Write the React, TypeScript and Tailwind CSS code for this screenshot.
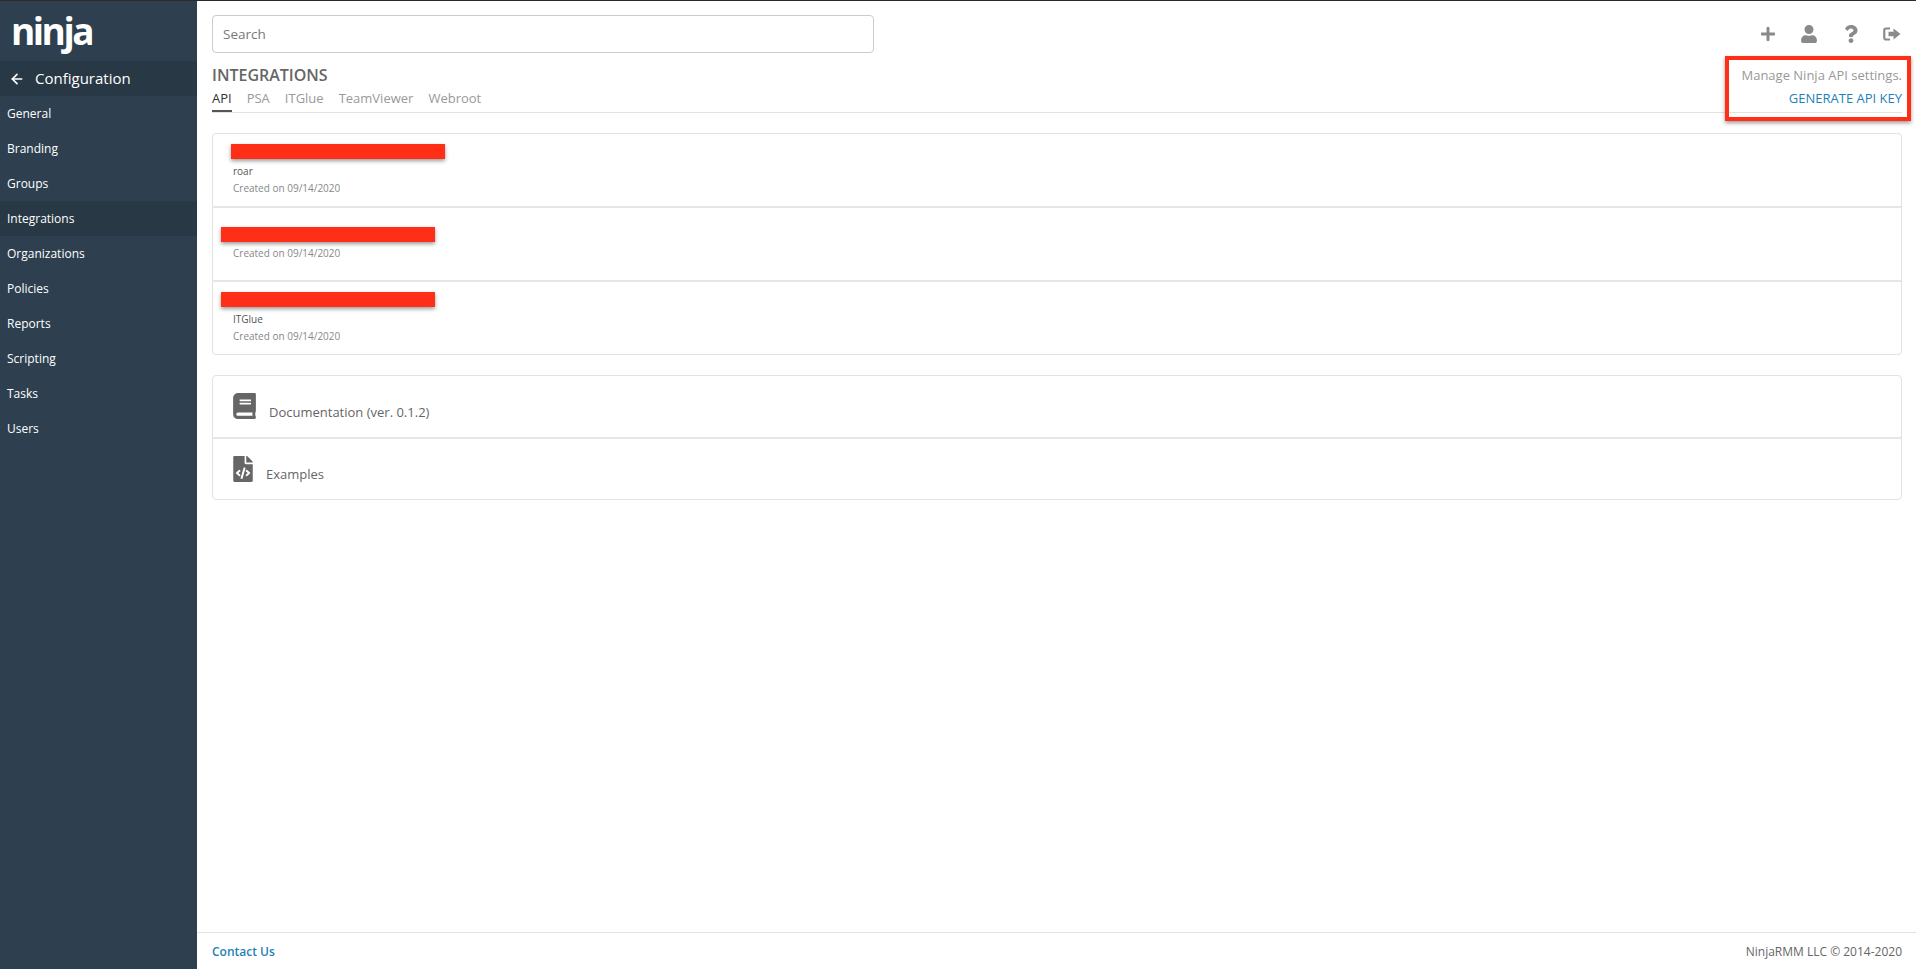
import { ArrowLeft } from 'lucide-react';
import { FaPlus, FaUser, FaQuestion, FaBook, FaFileCode } from 'react-icons/fa';

const navItems = ['General', 'Branding', 'Groups', 'Integrations', 'Organizations', 'Policies', 'Reports', 'Scripting', 'Tasks', 'Users'];
const tabs = ['API', 'PSA', 'ITGlue', 'TeamViewer', 'Webroot'];

function Redaction({ className }: { className: string }) {
  return <div className={`absolute h-[15px] w-[214px] bg-[#ff2f17] shadow-[0_2px_4px_rgba(0,0,0,0.4)] ${className}`} />;
}

function SignOutIcon() {
  return (
    <svg width="18" height="14" viewBox="0 0 18 14" fill="none">
      <path d="M7 1.5H3A1.75 1.75 0 0 0 1.25 3.25v7.5A1.75 1.75 0 0 0 3 12.5h4" stroke="currentColor" strokeWidth="2.2" />
      <path d="M10.5 1.5 17.5 7l-7 5.5V9.2H5.5V4.8h5z" fill="currentColor" />
    </svg>
  );
}

export default function App() {
  return (
    <div className="relative flex h-[969px] w-[1916px] overflow-hidden border-t border-[#2a2a2a] bg-white font-['Open_Sans',sans-serif] text-[#666]">
      {/* Sidebar */}
      <aside className="flex w-[197px] shrink-0 flex-col bg-[#2e3f50] text-white">
        <div className="flex h-[60px] items-center pb-[2px] pl-[11px]">
          <span className="text-[37px] leading-none font-bold tracking-[-2.5px] text-white">ninja</span>
        </div>
        <div className="flex h-[35px] items-center bg-[#283845] pl-[9px]">
          <ArrowLeft size={16} strokeWidth={2.5} />
          <span className="ml-[10px] text-[15px]">Configuration</span>
        </div>
        <nav className="flex flex-col">
          {navItems.map((item) => (
            <div key={item} className={`flex h-[35px] items-center pt-[1px] pl-[7px] text-[12px] font-medium ${item === 'Integrations' ? 'bg-[#283845]' : ''}`}>
              {item}
            </div>
          ))}
        </nav>
      </aside>

      {/* Main */}
      <main className="flex min-w-0 flex-1 flex-col">
        <div className="flex-1 pr-[14px] pl-[15px]">
          <div className="flex items-center justify-between pt-[14px]">
            <div className="flex h-[38px] w-[662px] items-center rounded-[4px] border border-[#ccc] pl-[10px] text-[13.5px] text-[#777]">Search</div>
            <div className="flex items-center gap-[23.33px] pr-[1px] text-[#8a8a8a]">
              <div className="flex w-[18px] justify-center"><FaPlus size={16} /></div>
              <div className="flex w-[18px] justify-center"><FaUser size={18} /></div>
              <div className="flex w-[18px] justify-center"><FaQuestion size={18} /></div>
              <div className="flex w-[18px] justify-center"><SignOutIcon /></div>
            </div>
          </div>

          <div className="mt-[11px] flex justify-between border-b border-[#e2e2e2]">
            <div>
              <h1 className="text-[16px] leading-[22px] font-semibold text-[#666]">INTEGRATIONS</h1>
              <div className="mt-[2px] flex gap-[15px] text-[13px]">
                {tabs.map((tab) => (
                  <div key={tab} className={`h-[24px] leading-[20px] ${tab === 'API' ? '-mb-px border-b-2 border-[#555] text-[#333]' : 'text-[#999]'}`}>
                    {tab}
                  </div>
                ))}
              </div>
            </div>
            <div className="flex flex-col items-end text-[13px]">
              <span className="leading-[22px] text-[#999]">Manage Ninja API settings.</span>
              <span className="mt-[2px] leading-[20px] text-[#1f7fb8]">GENERATE API KEY</span>
            </div>
          </div>

          {/* Keys */}
          <div className="relative mt-[20px] divide-y-2 divide-[#e6e6e6] rounded-[4px] border border-[#e2e2e2] text-[10px]">
            <div className="relative h-[74px] pl-[20px]">
              <Redaction className="top-[10px] left-[18px]" />
              <div className="pt-[29px] leading-[16px] text-[#555]">roar</div>
              <div className="mt-[1px] leading-[16px] text-[#888]">Created on 09/14/2020</div>
            </div>
            <div className="relative h-[74px] pl-[20px]">
              <Redaction className="top-[19px] left-[8px]" />
              <div className="pt-[37px] leading-[16px] text-[#888]">Created on 09/14/2020</div>
            </div>
            <div className="relative h-[72px] pl-[20px]">
              <Redaction className="top-[10px] left-[8px]" />
              <div className="pt-[29px] leading-[16px] text-[#555]">ITGlue</div>
              <div className="mt-[1px] leading-[16px] text-[#888]">Created on 09/14/2020</div>
            </div>
          </div>

          {/* Docs */}
          <div className="mt-[20px] divide-y-2 divide-[#e6e6e6] rounded-[4px] border border-[#e2e2e2] text-[13px] text-[#666]">
            <div className="flex h-[63px] pl-[20px]">
              <FaBook className="mt-[17px] h-[26px] w-[23px] text-[#666]" />
              <span className="mt-[26px] ml-[13px] leading-[20px]">Documentation (ver. 0.1.2)</span>
            </div>
            <div className="flex h-[60px] pl-[20px]">
              <FaFileCode className="mt-[17px] h-[26px] w-[20px] text-[#666]" />
              <span className="mt-[25px] ml-[13px] leading-[20px]">Examples</span>
            </div>
          </div>
        </div>

        <footer className="flex h-[37px] items-center justify-between border-t border-[#e2e2e2] pt-[2px] pr-[14px] pl-[15px] text-[12px]">
          <span className="font-semibold text-[#1f7fb8]">Contact Us</span>
          <span className="text-[#666]">NinjaRMM LLC © 2014-2020</span>
        </footer>
      </main>

      {/* Annotation box around the API key action */}
      <div className="absolute top-[55px] left-[1725px] h-[65px] w-[186px] border-4 border-[#ff2f17] shadow-[0_2px_4px_rgba(0,0,0,0.4)]" />
    </div>
  );
}
